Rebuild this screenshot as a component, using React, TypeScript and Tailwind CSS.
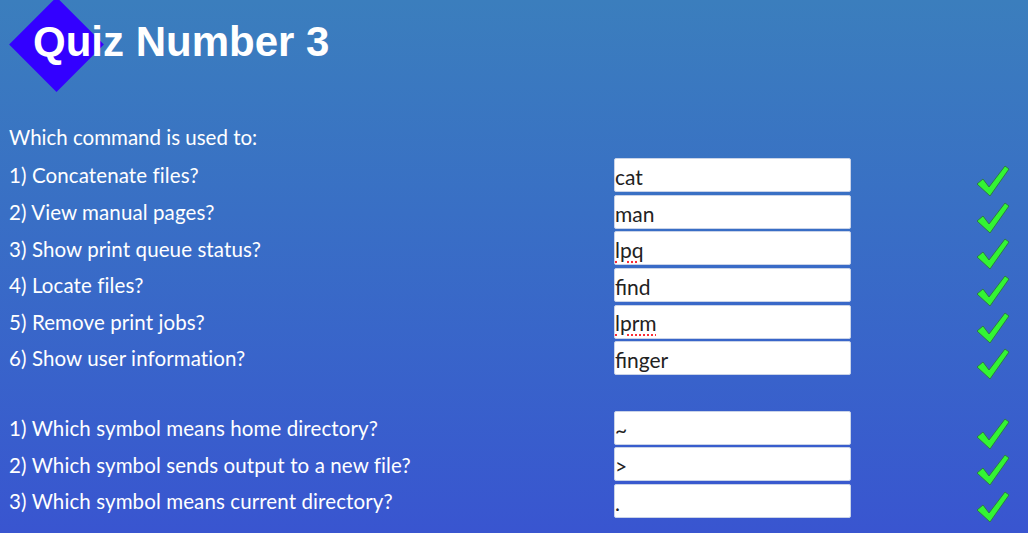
const commands = [
  { q: "1) Concatenate files?", a: "cat" },
  { q: "2) View manual pages?", a: "man" },
  { q: "3) Show print queue status?", a: "lpq", typo: true },
  { q: "4) Locate files?", a: "find" },
  { q: "5) Remove print jobs?", a: "lprm", typo: true },
  { q: "6) Show user information?", a: "finger" },
];

const symbols = [
  { q: "1) Which symbol means home directory?", a: "~" },
  { q: "2) Which symbol sends output to a new file?", a: ">" },
  { q: "3) Which symbol means current directory?", a: "." },
];

function Check() {
  return (
    <svg width="38" height="38" viewBox="0 0 38 38" className="mt-[12px]">
      <path
        d="M3 22 L9 17 L15 25 L31 4 L35 7 L16 34 Z"
        fill="#33f533"
        stroke="#2d7a4a"
        strokeWidth="1"
        strokeLinejoin="round"
      />
    </svg>
  );
}

function Row({ q, a, typo }: { q: string; a: string; typo?: boolean }) {
  return (
    <div className="flex items-center h-[36.6px]">
      <div className="w-[614px] pl-[9px] pt-[1px] text-white text-[20.5px] tracking-[0.1px]">{q}</div>
      <div className="w-[237px] h-[34px] bg-white border border-[#c9d3e8] rounded-[2px] flex items-center pl-0 pt-[3px] text-[21px] text-[#222]">
        <span
          className={
            typo ? "underline decoration-dotted decoration-red-500 underline-offset-[3px]" : ""
          }
        >
          {a}
        </span>
      </div>
      <div className="flex-1 flex justify-end pr-[16px] h-[34px] items-center">
        <Check />
      </div>
    </div>
  );
}

export default function App() {
  return (
    <div
      className="w-[1028px] h-[533px] overflow-hidden bg-gradient-to-b from-[#3b7ebd] to-[#3955d0]"
      style={{ fontFamily: "Lato, 'Open Sans', sans-serif" }}
    >
      <div className="relative h-[118px]">
        <div className="absolute left-[23px] top-[-1px] w-[67px] h-[67px] bg-[#3300ff] rotate-45 origin-center translate-y-[12px]" />
        <h1
          className="relative pl-[33px] pt-[18px] text-white font-bold text-[42px] leading-[48px]"
          style={{ fontFamily: "'Liberation Sans', Arial, sans-serif" }}
        >
          Quiz Number 3
        </h1>
      </div>
      <div className="pl-[9px] text-white text-[20.5px] h-[38px] pt-[1px] flex items-center">
        Which command is used to:
      </div>
      <div className="flex flex-col pt-[1px]">
        {commands.map((c) => (
          <Row key={c.q} {...c} />
        ))}
      </div>
      <div className="h-[33px]" />
      <div className="flex flex-col">
        {symbols.map((c) => (
          <Row key={c.q} {...c} />
        ))}
      </div>
    </div>
  );
}
